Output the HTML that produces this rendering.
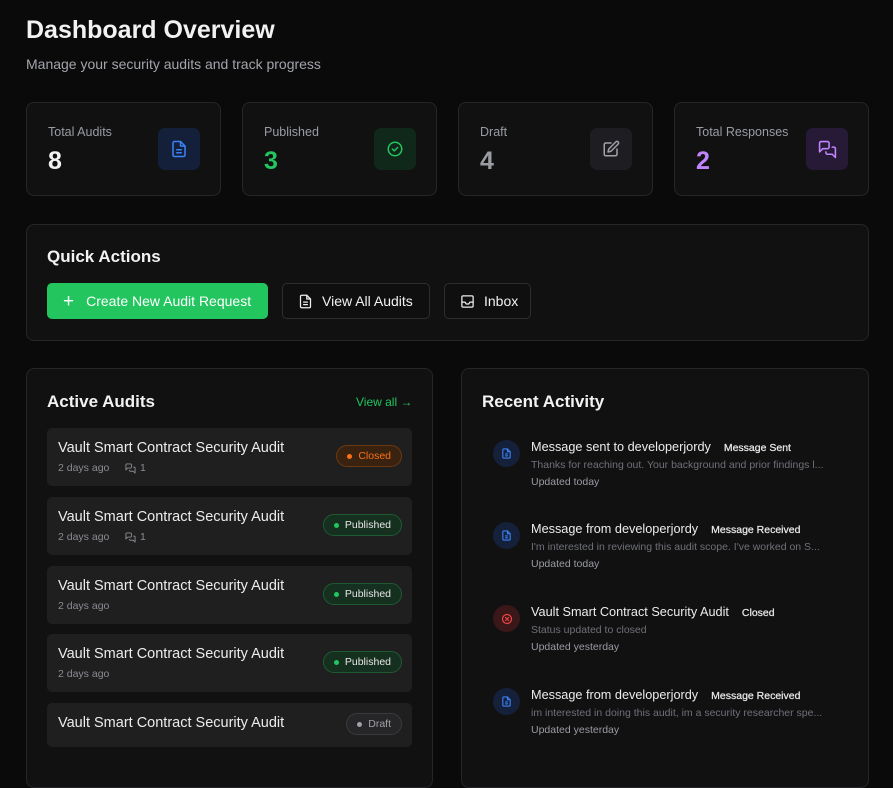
<!DOCTYPE html>
<html><head><meta charset="utf-8"><style>
*{box-sizing:border-box;margin:0;padding:0}
body{width:893px;height:760px;overflow:hidden;background:#0a0a0a;font-family:"Liberation Sans",sans-serif;color:#f2f2f2;position:relative}
.abs{position:absolute}
.card{position:absolute;background:#111112;border:1px solid #262628;border-radius:8px}
.lbl{position:absolute;left:21px;top:22px;font-size:12.5px;color:#9a9ca3}
.num{position:absolute;left:21px;top:44px;font-size:25px;font-weight:bold}
.ib{position:absolute;left:131px;top:25px;width:42px;height:42px;border-radius:7px;display:flex;align-items:center;justify-content:center}
.btn{position:absolute;top:283px;height:36px;border-radius:5px;font-size:14px;display:flex;align-items:center;gap:9px;padding:0 15px;white-space:nowrap}
.btn svg,.btn span{flex-shrink:0}
.item{position:absolute;left:47px;width:365px;background:#1f1f20;border-radius:5px}
.it{position:absolute;left:11px;top:12px;font-size:14.5px;color:#ececec}
.im{position:absolute;left:11px;top:34px;font-size:10.5px;color:#8a8c92;display:flex;align-items:center;gap:4px}
.pill{position:absolute;right:10px;height:22px;border-radius:11px;font-size:10.5px;display:flex;align-items:center;gap:6px;padding:0 10px}
.dot{width:5px;height:5px;border-radius:50%}
.act{position:absolute;left:493px}
.ac{position:absolute;left:0;top:0;width:27px;height:27px;border-radius:50%;display:flex;align-items:center;justify-content:center}
.at{position:absolute;left:38px;top:0;font-size:12.7px;color:#ececec;white-space:nowrap}
.at b{font-size:10.5px;font-weight:normal;margin-left:13px;color:#e8e8e8;-webkit-text-stroke:0.25px #e8e8e8}
.as{position:absolute;left:38px;top:19px;font-size:10.5px;color:#6f7178;white-space:nowrap}
.au{position:absolute;left:38px;top:36px;font-size:10.5px;color:#9a9ca3;white-space:nowrap}
</style></head><body>
<div class="abs" style="left:26px;top:16px;font-size:25px;font-weight:bold">Dashboard Overview</div>
<div class="abs" style="left:26px;top:56px;font-size:14px;color:#a3a5ab">Manage your security audits and track progress</div>

<div class="card" style="left:26px;top:102px;width:195px;height:94px"><div class="lbl">Total Audits</div><div class="num">8</div>
<div class="ib" style="background:#14203a"><svg width="18" height="18" viewBox="0 0 24 24" fill="none" stroke="#3b82f6" stroke-width="2" stroke-linecap="round" stroke-linejoin="round"><path d="M14 2H6a2 2 0 0 0-2 2v16a2 2 0 0 0 2 2h12a2 2 0 0 0 2-2V8z"/><path d="M14 2v6h6M9 13h6M9 17h6"/></svg></div></div>
<div class="card" style="left:242px;top:102px;width:195px;height:94px"><div class="lbl">Published</div><div class="num" style="color:#22c55e">3</div>
<div class="ib" style="background:#10281a"><svg width="18" height="18" viewBox="0 0 24 24" fill="none" stroke="#22c55e" stroke-width="2" stroke-linecap="round" stroke-linejoin="round"><circle cx="12" cy="12" r="9"/><path d="M8.5 12l2.5 2.5 4.5-4.5"/></svg></div></div>
<div class="card" style="left:458px;top:102px;width:195px;height:94px"><div class="lbl">Draft</div><div class="num" style="color:#9a9ca3">4</div>
<div class="ib" style="background:#1e1e22"><svg width="18" height="18" viewBox="0 0 24 24" fill="none" stroke="#a0a2a8" stroke-width="2" stroke-linecap="round" stroke-linejoin="round"><path d="M12 4H5a2 2 0 0 0-2 2v13a2 2 0 0 0 2 2h13a2 2 0 0 0 2-2v-7"/><path d="M18.5 2.5a2.1 2.1 0 0 1 3 3L12 15l-4 1 1-4z"/></svg></div></div>
<div class="card" style="left:674px;top:102px;width:195px;height:94px"><div class="lbl">Total Responses</div><div class="num" style="color:#c084fc">2</div>
<div class="ib" style="background:#261a36"><svg width="19" height="19" viewBox="0 0 24 24" fill="none" stroke="#c084fc" stroke-width="2" stroke-linecap="round" stroke-linejoin="round"><path d="M14 9a2 2 0 0 1-2 2H6l-4 4V4a2 2 0 0 1 2-2h8a2 2 0 0 1 2 2z"/><path d="M18 9h2a2 2 0 0 1 2 2v11l-4-4h-6a2 2 0 0 1-2-2v-1"/></svg></div></div>

<div class="card" style="left:26px;top:224px;width:843px;height:117px"></div>
<div class="abs" style="left:47px;top:247px;font-size:17px;font-weight:bold">Quick Actions</div>
<div class="btn" style="left:47px;width:221px;background:#22c55e;color:#fff;padding-left:16px;gap:12px"><span style="font-size:19px;line-height:1">+</span>Create New Audit Request</div>
<div class="btn" style="left:282px;width:148px;border:1px solid #2e2e30;background:#0f0f10"><svg width="15" height="15" viewBox="0 0 24 24" fill="none" stroke="#eee" stroke-width="2" stroke-linecap="round" stroke-linejoin="round"><path d="M14 2H6a2 2 0 0 0-2 2v16a2 2 0 0 0 2 2h12a2 2 0 0 0 2-2V8z"/><path d="M14 2v6h6M9 13h6M9 17h6"/></svg>View All Audits</div>
<div class="btn" style="left:444px;width:87px;border:1px solid #2e2e30;background:#0f0f10"><svg width="15" height="15" viewBox="0 0 24 24" fill="none" stroke="#eee" stroke-width="2" stroke-linecap="round" stroke-linejoin="round"><rect x="3" y="3" width="18" height="18" rx="2"/><path d="M3 13h5l2 3h4l2-3h5"/></svg>Inbox</div>

<div class="card" style="left:26px;top:368px;width:407px;height:420px"></div>
<div class="abs" style="left:47px;top:392px;font-size:17px;font-weight:bold">Active Audits</div>
<div class="abs" style="left:356px;top:395px;font-size:12px;color:#22c55e">View all →</div>

<div class="item" style="top:428px;height:58px"><div class="it">Vault Smart Contract Security Audit</div><div class="im">2 days ago&nbsp;&nbsp;&nbsp;&nbsp;<svg width="11" height="11" viewBox="0 0 24 24" fill="none" stroke="#8a8c92" stroke-width="2" stroke-linejoin="round"><path d="M14 9a2 2 0 0 1-2 2H6l-4 4V4a2 2 0 0 1 2-2h8a2 2 0 0 1 2 2z"/><path d="M18 9h2a2 2 0 0 1 2 2v11l-4-4h-6a2 2 0 0 1-2-2v-1"/></svg>1</div>
<div class="pill" style="top:17px;background:#3a2210;border:1px solid #6b3a12;color:#f97316"><span class="dot" style="background:#f97316"></span>Closed</div></div>
<div class="item" style="top:497px;height:58px"><div class="it">Vault Smart Contract Security Audit</div><div class="im">2 days ago&nbsp;&nbsp;&nbsp;&nbsp;<svg width="11" height="11" viewBox="0 0 24 24" fill="none" stroke="#8a8c92" stroke-width="2" stroke-linejoin="round"><path d="M14 9a2 2 0 0 1-2 2H6l-4 4V4a2 2 0 0 1 2-2h8a2 2 0 0 1 2 2z"/><path d="M18 9h2a2 2 0 0 1 2 2v11l-4-4h-6a2 2 0 0 1-2-2v-1"/></svg>1</div>
<div class="pill" style="top:17px;background:#16301f;border:1px solid #1f5a33;color:#e6e6e6"><span class="dot" style="background:#22c55e"></span>Published</div></div>
<div class="item" style="top:566px;height:58px"><div class="it">Vault Smart Contract Security Audit</div><div class="im">2 days ago</div>
<div class="pill" style="top:17px;background:#16301f;border:1px solid #1f5a33;color:#e6e6e6"><span class="dot" style="background:#22c55e"></span>Published</div></div>
<div class="item" style="top:634px;height:58px"><div class="it">Vault Smart Contract Security Audit</div><div class="im">2 days ago</div>
<div class="pill" style="top:17px;background:#16301f;border:1px solid #1f5a33;color:#e6e6e6"><span class="dot" style="background:#22c55e"></span>Published</div></div>
<div class="item" style="top:703px;height:44px"><div class="it">Vault Smart Contract Security Audit</div>
<div class="pill" style="top:10px;background:#262628;border:1px solid #3a3a3d;color:#a0a2a8"><span class="dot" style="background:#a0a2a8"></span>Draft</div></div>

<div class="card" style="left:461px;top:368px;width:408px;height:420px"></div>
<div class="abs" style="left:482px;top:392px;font-size:17px;font-weight:bold">Recent Activity</div>

<div class="act" style="top:440px"><div class="ac" style="background:#15213a"><svg width="11" height="11" viewBox="0 0 24 24" fill="none" stroke="#3b82f6" stroke-width="2.4"><path d="M14 2H6a2 2 0 0 0-2 2v16a2 2 0 0 0 2 2h12a2 2 0 0 0 2-2V8z"/><path d="M14 2v6h6M9 13h6M9 17h6"/></svg></div>
<div class="at">Message sent to developerjordy<b>Message Sent</b></div><div class="as">Thanks for reaching out. Your background and prior findings l...</div><div class="au">Updated today</div></div>
<div class="act" style="top:522px"><div class="ac" style="background:#15213a"><svg width="11" height="11" viewBox="0 0 24 24" fill="none" stroke="#3b82f6" stroke-width="2.4"><path d="M14 2H6a2 2 0 0 0-2 2v16a2 2 0 0 0 2 2h12a2 2 0 0 0 2-2V8z"/><path d="M14 2v6h6M9 13h6M9 17h6"/></svg></div>
<div class="at">Message from developerjordy<b>Message Received</b></div><div class="as">I'm interested in reviewing this audit scope. I've worked on S...</div><div class="au">Updated today</div></div>
<div class="act" style="top:605px"><div class="ac" style="background:#3a1719"><svg width="12" height="12" viewBox="0 0 24 24" fill="none" stroke="#ef4444" stroke-width="2.4" stroke-linecap="round"><circle cx="12" cy="12" r="9"/><path d="M9 9l6 6M15 9l-6 6"/></svg></div>
<div class="at">Vault Smart Contract Security Audit<b>Closed</b></div><div class="as">Status updated to closed</div><div class="au">Updated yesterday</div></div>
<div class="act" style="top:688px"><div class="ac" style="background:#15213a"><svg width="11" height="11" viewBox="0 0 24 24" fill="none" stroke="#3b82f6" stroke-width="2.4"><path d="M14 2H6a2 2 0 0 0-2 2v16a2 2 0 0 0 2 2h12a2 2 0 0 0 2-2V8z"/><path d="M14 2v6h6M9 13h6M9 17h6"/></svg></div>
<div class="at">Message from developerjordy<b>Message Received</b></div><div class="as">im interested in doing this audit, im a security researcher spe...</div><div class="au">Updated yesterday</div></div>
</body></html>
